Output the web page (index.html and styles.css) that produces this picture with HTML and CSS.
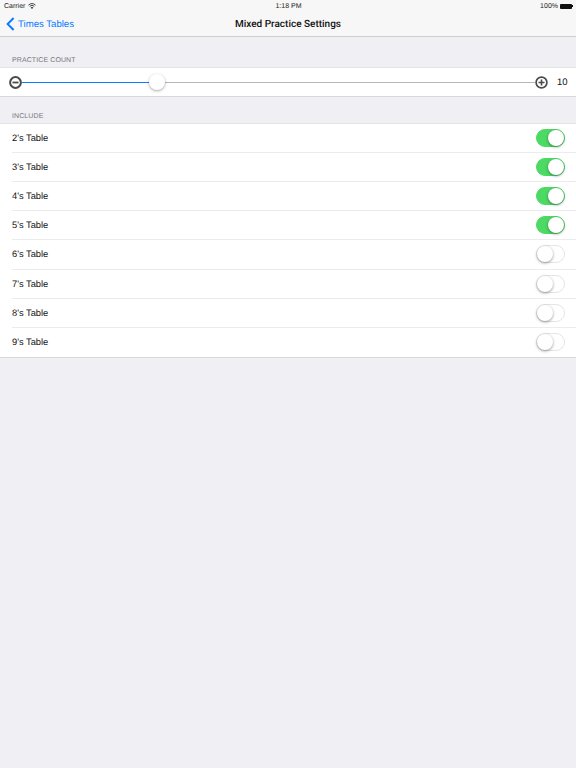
FILE: index.html
```html
<!DOCTYPE html>
<html lang="en">
<head>
    <meta charset="UTF-8">
    <meta name="viewport" content="width=device-width, initial-scale=1.0">
    <title>Mixed Practice Settings</title>
    <link rel="stylesheet" href="styles.css">
</head>
<body>
    <header class="top-bar">
        <div class="status-bar">
            <div class="status-left">
                <span>Carrier</span>
                <svg class="wifi" width="8" height="6" viewBox="0 0 16 12">
                    <path d="M1 4.2 A10.5 10.5 0 0 1 15 4.2 M3.4 6.6 A7 7 0 0 1 12.6 6.6" fill="none" stroke="#222" stroke-width="1.7"/>
                    <path d="M8 12 L5.4 8.9 A4 4 0 0 1 10.6 8.9 Z" fill="#222"/>
                </svg>
            </div>
            <div class="status-time">1:18 PM</div>
            <div class="status-right">
                <span>100%</span>
                <span class="battery"></span>
                <span class="battery-tip"></span>
            </div>
        </div>
        <nav class="nav-bar">
            <a class="back-link">
                <svg width="9" height="14" viewBox="0 0 9 14">
                    <path d="M7.6 1 L1.6 7 L7.6 13" fill="none" stroke="#0a7aff" stroke-width="1.9"/>
                </svg>
                <span>Times Tables</span>
            </a>
            <h1 class="nav-title">Mixed Practice Settings</h1>
        </nav>
    </header>

    <h2 class="section-label first">PRACTICE COUNT</h2>
    <section class="group slider-cell">
        <svg class="round-btn" width="13" height="13" viewBox="0 0 13 13">
            <circle cx="6.5" cy="6.5" r="5.4" fill="none" stroke="#4a4a4a" stroke-width="2"/>
            <path d="M3.5 6.5 H9.5" stroke="#4a4a4a" stroke-width="1.8"/>
        </svg>
        <div class="slider-track">
            <div class="slider-fill"></div>
            <div class="slider-knob"></div>
        </div>
        <svg class="round-btn" width="13" height="13" viewBox="0 0 13 13">
            <circle cx="6.5" cy="6.5" r="5.4" fill="none" stroke="#4a4a4a" stroke-width="1.7"/>
            <path d="M3.5 6.5 H9.5 M6.5 3.5 V9.5" stroke="#4a4a4a" stroke-width="1.6"/>
        </svg>
        <span class="slider-value">10</span>
    </section>

    <h2 class="section-label">INCLUDE</h2>
    <section class="group">
        <div class="row"><span>2's Table</span><span class="switch on"></span></div>
        <div class="row"><span>3's Table</span><span class="switch on"></span></div>
        <div class="row"><span>4's Table</span><span class="switch on"></span></div>
        <div class="row"><span>5's Table</span><span class="switch on"></span></div>
        <div class="row"><span>6's Table</span><span class="switch"></span></div>
        <div class="row"><span>7's Table</span><span class="switch"></span></div>
        <div class="row"><span>8's Table</span><span class="switch"></span></div>
        <div class="row"><span>9's Table</span><span class="switch"></span></div>
    </section>
</body>
</html>
```

FILE: styles.css
```css
* {
    box-sizing: border-box;
}
body {
    margin: 0;
    height: 768px;
    overflow: hidden;
    background: #efeff4;
    color: #111;
    font-family: "Liberation Sans", Arial, sans-serif;
    text-rendering: geometricPrecision;
}
.top-bar {
    height: 37px;
    background: #f7f7f8;
    border-bottom: 1px solid #cfcfd2;
}
.status-bar {
    display: grid;
    grid-template-columns: 1fr auto 1fr;
    align-items: center;
    height: 12px;
    padding: 0 3px 0 4px;
    font-size: 7px;
    color: #222;
}
.status-left {
    display: flex;
    align-items: center;
    gap: 3px;
}
.status-right {
    display: flex;
    align-items: center;
    justify-content: flex-end;
}
.battery {
    width: 12px;
    height: 5px;
    margin-left: 2px;
    background: #111;
    border-radius: 1px;
}
.battery-tip {
    width: 1px;
    height: 2px;
    background: #111;
}
.nav-bar {
    display: flex;
    align-items: center;
    justify-content: center;
    position: relative;
    height: 24px;
}
.nav-title {
    margin: 0;
    font-family: Roboto, sans-serif;
    font-size: 10px;
    font-weight: 500;
}
.back-link {
    display: flex;
    align-items: center;
    gap: 3px;
    position: absolute;
    left: 6px;
    top: 5px;
    color: #0a7aff;
    font-size: 9.6px;
}
.section-label {
    margin: 0;
    padding: 14px 12px 1px;
    height: 26px;
    font-size: 7px;
    font-weight: 400;
    line-height: 11px;
    color: #77777c;
    letter-spacing: 0.1px;
}
.section-label.first {
    height: 30px;
    padding-top: 18px;
}
.group {
    background: #fff;
    border-top: 1px solid #e3e3e6;
    border-bottom: 1px solid #d9d9dc;
}
.slider-cell {
    display: flex;
    align-items: center;
    height: 30px;
    padding: 0 9px;
}
.slider-track {
    position: relative;
    flex: 1;
    height: 1px;
    background: #b6b6b8;
}
.slider-fill {
    position: absolute;
    left: 0;
    top: 0;
    width: 26%;
    height: 1px;
    background: #0a7aff;
}
.slider-knob {
    position: absolute;
    left: 24.7%;
    top: -8px;
    width: 16px;
    height: 16px;
    border-radius: 50%;
    background: #fff;
    box-shadow: 0 1px 3px rgba(0, 0, 0, 0.35);
}
.slider-value {
    width: 10px;
    margin-left: 9px;
    font-size: 9.5px;
}
.row {
    display: flex;
    align-items: center;
    justify-content: space-between;
    height: 29.12px;
    margin-left: 12px;
    padding-right: 11.5px;
    font-size: 9.3px;
    border-bottom: 1px solid #ececee;
}
.row:last-child {
    border-bottom: 0;
}
.switch {
    position: relative;
    width: 29px;
    height: 18px;
    border-radius: 9px;
    background: #fff;
    border: 1px solid #e5e5e7;
}
.switch::after {
    content: "";
    position: absolute;
    left: 0;
    top: 0;
    width: 16px;
    height: 16px;
    border-radius: 50%;
    background: #fff;
    box-shadow: 0 1px 3px rgba(0, 0, 0, 0.4);
}
.switch.on {
    background: #4cd964;
    border-color: #4cd964;
}
.switch.on::after {
    left: 11px;
}
```
